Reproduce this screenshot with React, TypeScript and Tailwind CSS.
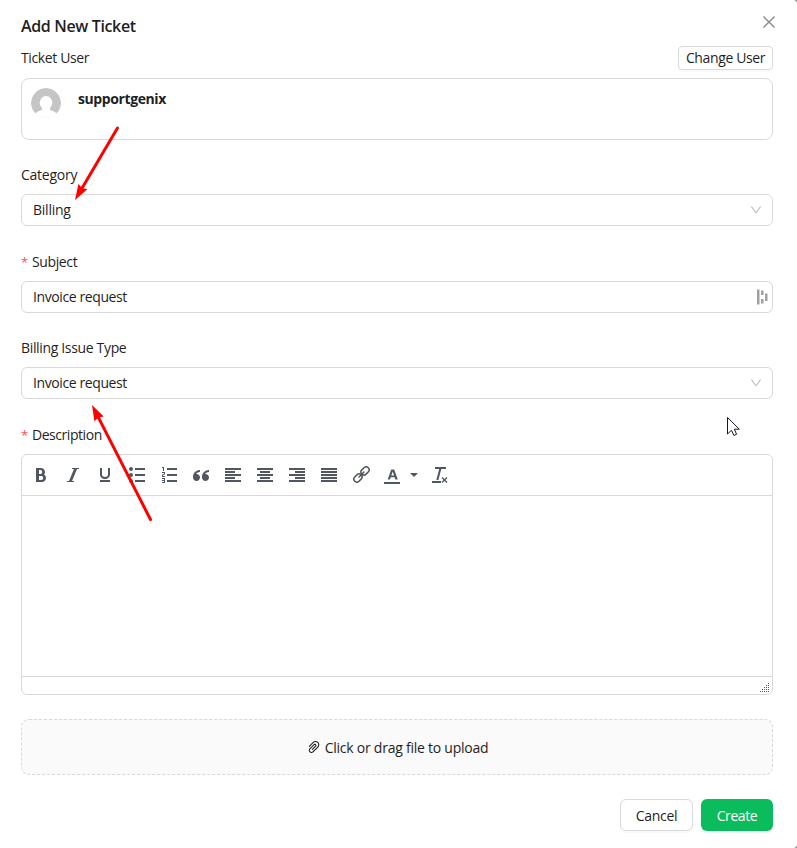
import React from 'react';
import { AiOutlineClose, AiOutlineDown, AiOutlinePaperClip } from 'react-icons/ai';
import {
    ImBold,
    ImClearFormatting,
    ImItalic,
    ImListNumbered,
    ImList2,
    ImParagraphCenter,
    ImParagraphJustify,
    ImParagraphLeft,
    ImParagraphRight,
    ImQuotesLeft,
    ImUnderline,
} from 'react-icons/im';

interface FieldProps {
    label: string;
    labelClass?: string;
    required?: boolean;
    children: React.ReactNode;
}

function Field({ label, labelClass = '', required, children }: FieldProps) {
    return (
        <div>
            <label className="flex h-[22px] items-center mb-2">
                {required && <span className="mr-1 w-[7px] text-[13px] text-[#ff4d4f]">*</span>}
                <span className={labelClass}>{label}</span>
            </label>
            {children}
        </div>
    );
}

function SelectBox({ value, valueClass = '' }: { value: string; valueClass?: string }) {
    return (
        <div className="flex h-8 items-center justify-between rounded-md border border-[#d9d9d9] pl-[11px] pr-[9px]">
            <span className={valueClass}>{value}</span>
            <AiOutlineDown className="h-[14px] w-[14px] text-[#bfbfbf]" />
        </div>
    );
}

function LinkIcon() {
    return (
        <svg viewBox="0 0 17 17" className="h-[17px] w-[17px]" fill="none" stroke="currentColor" strokeWidth="1.5">
            <g transform="rotate(-45 8.5 8.5)">
                <rect x="-1" y="5.500" width="9" height="6" rx="3" />
                <rect x="9" y="5.500" width="9" height="6" rx="3" />
                <path d="M5 8.500h7" strokeLinecap="round" />
            </g>
        </svg>
    );
}

function ForeColorIcon() {
    return (
        <svg viewBox="0 0 16 16" className="h-4 w-4 overflow-visible" fill="currentColor">
            <path d="M0 15h16v2H0z" />
            <path fillRule="evenodd" d="M7.200 2.500h3l3.600 10h-2.400l-.8-2.300H6.700L6 12.500H3.700zM8.700 4.600 7.300 8.600h2.800z" />
        </svg>
    );
}

function FormatToolbar() {
    return (
        <div className="flex h-10 items-center gap-4 pl-[11px] text-[#50575e]">
            <ImBold className="h-4 w-4" />
            <ImItalic className="h-4 w-4" />
            <ImUnderline className="h-4 w-4" />
            <ImList2 className="h-4 w-4" />
            <ImListNumbered className="h-4 w-4" />
            <ImQuotesLeft className="h-4 w-4" />
            <ImParagraphLeft className="h-4 w-4" />
            <ImParagraphCenter className="h-4 w-4" />
            <ImParagraphRight className="h-4 w-4" />
            <ImParagraphJustify className="h-4 w-4" />
            <LinkIcon />
            <div className="flex items-center gap-[10px] -ml-[2px]">
                <ForeColorIcon />
                <span className="h-0 w-0 border-x-4 border-t-4 border-x-transparent border-t-[#50575e]" />
            </div>
            <ImClearFormatting className="h-4 w-4 -ml-[2px]" />
        </div>
    );
}

// dotted triangle in the editor's lower right corner
function ResizeGrip() {
    const dots = [];
    for (let row = 0; row < 5; row++) {
        for (let col = 4 - row; col < 5; col++) {
            dots.push(<rect key={`${row}-${col}`} x={col * 2} y={row * 2} width="1" height="1" />);
        }
    }
    return (
        <svg viewBox="0 0 10 10" width="10" height="10" fill="#50575e" shapeRendering="crispEdges">
            {dots}
        </svg>
    );
}

function Arrow({ from, to }: { from: [number, number]; to: [number, number] }) {
    const angle = Math.atan2(to[1] - from[1], to[0] - from[0]);
    const length = Math.hypot(to[0] - from[0], to[1] - from[1]);
    return (
        <g transform={`translate(${from[0]} ${from[1]}) rotate(${(angle * 180) / Math.PI})`} fill="#ff0000">
            <path d={`M0 0H${length - 10}`} stroke="#ff0000" strokeWidth="3" strokeLinecap="round" />
            <path d={`M${length} 0l-15.500 5.200 1.500-5.200-1.500-5.200z`} />
        </g>
    );
}

export default function App() {
    return (
        <div className="bg-[#8c8c8c]">
            <div className="relative h-[848px] w-[797px] overflow-hidden rounded-r-[4px] bg-white pl-[21px] pr-6 pt-[15px] font-['Open_Sans','Noto_Sans',sans-serif] text-[14px] leading-[22px] text-[#1f1f1f]">
                <div className="flex h-6 items-center justify-between">
                    <h1 className="-mt-[3px] text-[16px] font-semibold tracking-[-0.36px]">Add New Ticket</h1>
                    <button className="-mr-[5px] -mt-2.5">
                        <AiOutlineClose className="h-[18px] w-[18px] text-[#8c8c8c]" />
                    </button>
                </div>

                <div className="mt-[7px] flex h-6 items-center justify-between">
                    <span className="tracking-[-0.38px]">Ticket User</span>
                    <button className="h-6 w-[95px] whitespace-nowrap rounded border border-[#d9d9d9] leading-[22px] tracking-[-0.38px] shadow-[0_2px_0_rgba(0,0,0,0.02)]">
                        Change User
                    </button>
                </div>

                <div className="mt-2 flex h-[62px] rounded-lg border border-[#d9d9d9] pl-[9px] pt-[9px]">
                    <svg viewBox="0 0 30 30" width="30" height="30" className="rounded-full">
                        <circle cx="15" cy="15" r="15" fill="#c5c5c5" />
                        <ellipse cx="15" cy="14.800" rx="6.300" ry="6.800" fill="#fff" />
                        <path d="M11 18v4c-3 .6-6 2.300-8.500 5V30h25v-3c-2.500-2.700-5.500-4.400-8.500-5v-4z" fill="#fff" />
                    </svg>
                    <strong className="ml-[17px] font-bold tracking-[-0.4px]">supportgenix</strong>
                </div>

                <div className="mt-6 flex flex-col gap-[24.6px]">
                    <Field label="Category" labelClass="tracking-[-0.24px]">
                        <SelectBox value="Billing" valueClass="tracking-[-0.24px]" />
                    </Field>
                    <Field label="Subject" labelClass="tracking-[-0.38px]" required>
                        <div className="flex h-8 items-center justify-between rounded-md border border-[#d9d9d9] pl-[11px] pr-[4px]">
                            <span className="tracking-[-0.4px]">Invoice request</span>
                            <svg viewBox="0 0 11 16" width="11" height="16" fill="#a0a0a0">
                                <path d="M0 .5h2.500v15H0zM4 1.500h2.500v4.500H4zM4 10h2.500v4.500H4zM8 4.500h2.500v7.500H8z" />
                            </svg>
                        </div>
                    </Field>
                    <Field label="Billing Issue Type" labelClass="tracking-[-0.34px]">
                        <SelectBox value="Invoice request" valueClass="tracking-[-0.4px]" />
                    </Field>
                    <Field label="Description" labelClass="tracking-[-0.45px]" required>
                        <div className="flex h-[241px] flex-col rounded-md border border-[#d9d9d9]">
                            <FormatToolbar />
                            <div className="flex-1 border-y border-[#d9d9d9]" />
                            <div className="flex h-[17px] items-end justify-end pb-px pr-[2px]">
                                <ResizeGrip />
                            </div>
                        </div>
                    </Field>
                </div>

                <div className="mt-6 flex h-14 items-center justify-center gap-[3px] rounded-lg border border-dashed border-[#d9d9d9] bg-[#fafafa]">
                    <AiOutlinePaperClip className="h-4 w-4" />
                    <span className="pt-[2px] tracking-[-0.24px]">Click or drag file to upload</span>
                </div>

                <div className="mt-6 flex justify-end gap-2">
                    <button className="h-8 w-[73px] rounded-md border border-[#d9d9d9] pt-[2px] tracking-[-0.3px] shadow-[0_2px_0_rgba(0,0,0,0.02)]">
                        Cancel
                    </button>
                    <button className="h-8 w-[72px] rounded-md bg-[#0bbc5c] pt-[2px] tracking-[-0.4px] text-white shadow-[0_2px_0_rgba(5,255,155,0.06)]">
                        Create
                    </button>
                </div>

                <svg className="pointer-events-none absolute left-0 top-0" width="797" height="848" viewBox="0 0 797 848">
                    <Arrow from={[117.5, 128]} to={[75, 200]} />
                    <Arrow from={[150.5, 519.5]} to={[92, 405]} />
                    <path d="M727.500 417.500v16.500l4-3.700 2.400 5.200 2.700-1.200-2.300-5.100h5z" fill="#fff" stroke="#111827" strokeWidth="1" />
                </svg>
            </div>
        </div>
    );
}
